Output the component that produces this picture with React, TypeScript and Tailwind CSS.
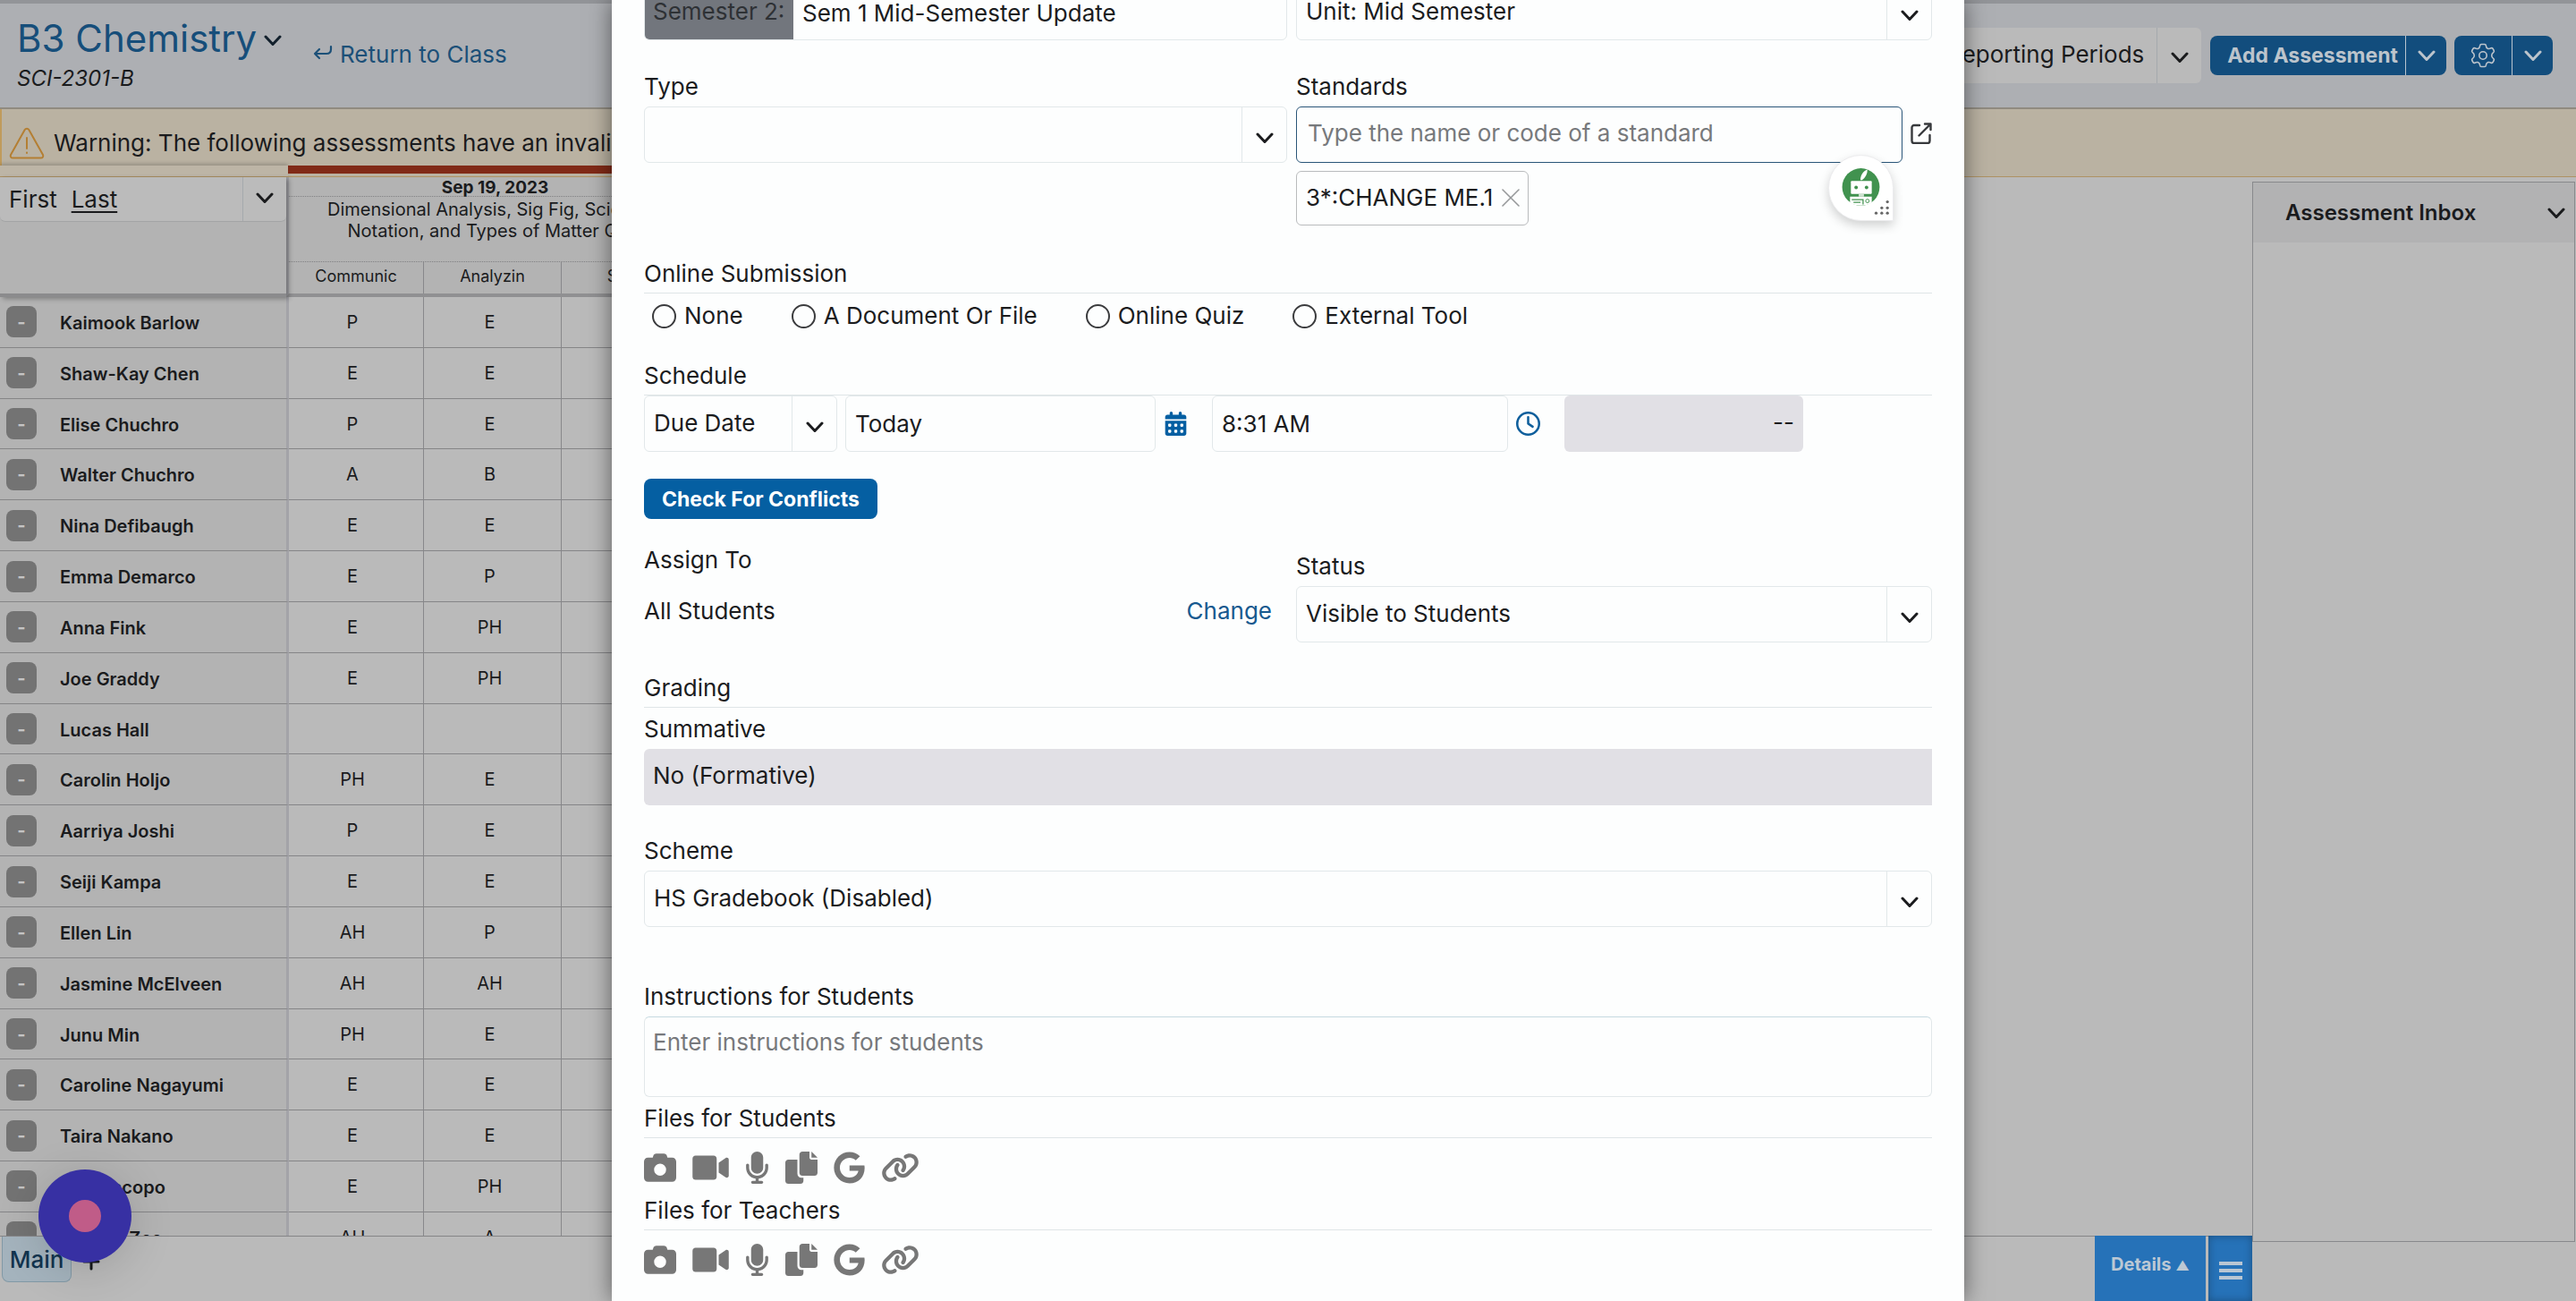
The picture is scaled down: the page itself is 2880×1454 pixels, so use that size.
import { ReactNode } from 'react';
import { FaCamera, FaMicrophone, FaGoogle, FaLink, FaCalendarDays, FaRegClock } from 'react-icons/fa6';

const students = [
    ['Kaimook Barlow', 'P', 'E'],
    ['Shaw-Kay Chen', 'E', 'E'],
    ['Elise Chuchro', 'P', 'E'],
    ['Walter Chuchro', 'A', 'B'],
    ['Nina Defibaugh', 'E', 'E'],
    ['Emma Demarco', 'E', 'P'],
    ['Anna Fink', 'E', 'PH'],
    ['Joe Graddy', 'E', 'PH'],
    ['Lucas Hall', '', ''],
    ['Carolin Holjo', 'PH', 'E'],
    ['Aarriya Joshi', 'P', 'E'],
    ['Seiji Kampa', 'E', 'E'],
    ['Ellen Lin', 'AH', 'P'],
    ['Jasmine McElveen', 'AH', 'AH'],
    ['Junu Min', 'PH', 'E'],
    ['Caroline Nagayumi', 'E', 'E'],
    ['Taira Nakano', 'E', 'E'],
    ['Mia Piscopo', 'E', 'PH'],
    ['Marcus Zee', 'AH', 'A'],
];

function Chevron({ className = '' }: { className?: string }) {
    return (
        <svg className={`w-5 h-5 ${className}`} viewBox="0 0 20 20" fill="none" stroke="currentColor" strokeWidth="3" strokeLinecap="round" strokeLinejoin="round" aria-hidden="true">
            <path d="M2 6 10 14.500 18 6" />
        </svg>
    );
}

function SelectField({ id, value, className = '' }: { id: string; value: string; className?: string }) {
    return (
        <div className={`relative h-[63px] ${className}`}>
            <select id={id} aria-label={value || id} className="appearance-none w-full h-full rounded-md border border-[#e2e8ea] bg-transparent pl-2.5 pr-14 pb-0.5">
                <option>{value}</option>
            </select>
            <div className="absolute inset-y-0 right-0 w-[51px] border-l border-[#e2e8ea] flex items-center justify-center pt-1.5 pointer-events-none">
                <Chevron />
            </div>
        </div>
    );
}

function SectionTitle({ children }: { children: ReactNode }) {
    return <h3 className="h-10 leading-9 border-b border-[#dfe5e7]">{children}</h3>;
}

function FileButtons() {
    return (
        <div className="flex items-center h-[66px] text-[#777777]">
            <button aria-label="Take photo" className="mr-[18px]"><FaCamera className="w-9 h-9" /></button>
            <button aria-label="Record video" className="mr-[18px]">
                <svg viewBox="0 0 576 512" className="w-[41px] h-9" fill="currentColor">
                    <path d="M384 112v288c0 26.51-21.49 48-48 48h-288c-26.51 0-48-21.49-48-48v-288c0-26.51 21.49-48 48-48h288C362.5 64 384 85.49 384 112zM576 127.5v256.9c0 25.5-29.17 40.39-50.39 25.79L416 334.7V177.3l109.6-75.56C546.9 87.13 576 102.1 576 127.5z" />
                </svg>
            </button>
            <button aria-label="Record audio" className="mr-[18px]"><FaMicrophone className="w-[27px] h-9" /></button>
            <button aria-label="Attach file" className="mr-[18px]">
                <svg viewBox="0 0 512 512" className="w-9 h-9" fill="currentColor">
                    <path d="M384 96L384 0h-112c-26.51 0-48 21.49-48 48v288c0 26.51 21.49 48 48 48H464c26.51 0 48-21.49 48-48V128h-95.1C398.4 128 384 113.6 384 96zM416 0v96h96L416 0zM192 352V128h-144c-26.51 0-48 21.49-48 48v288c0 26.51 21.49 48 48 48h192c26.51 0 48-21.49 48-48L288 416h-32C220.7 416 192 387.3 192 352z" />
                </svg>
            </button>
            <button aria-label="Google Drive" className="mr-[18px]"><FaGoogle className="w-[35px] h-9" /></button>
            <button aria-label="Add link"><FaLink className="w-[43px] h-9" /></button>
        </div>
    );
}

function Header() {
    return (
        <header className="h-[122px] shrink-0 flex bg-[#adafb3] border-t-4 border-t-[#929498] border-b-2 border-b-[#908b80]">
            <div className="pl-[19px] pt-3 w-[350px]">
                <button className="flex items-center gap-2 text-[42px] leading-[54px] text-[#164e7a] whitespace-nowrap">
                    B3 Chemistry <Chevron className="text-[#12202c] mt-1" />
                </button>
                <p className="text-2xl leading-9 italic">SCI-2301-B</p>
            </div>
            <a href="#class" className="flex items-center gap-2 h-[112px] text-[26px] text-[#1c5078]">
                <svg className="w-[22px] h-[22px]" viewBox="0 0 22 22" fill="none" stroke="currentColor" strokeWidth="2.2" strokeLinecap="round" strokeLinejoin="round">
                    <path d="M20 3v3c0 3-2 5-5 5H2M7 6l-5 5 5 5" />
                </svg>
                Return to Class
            </a>
            <div className="ml-auto mr-[26px] flex items-center h-[116px]">
                <button className="flex items-center h-[62px] rounded-md bg-[#bababa] text-[26px] mr-2.5">
                    <span className="px-3.5 pb-1 whitespace-nowrap">All Reporting Periods</span>
                    <span className="h-full w-[50px] border-l border-[#a5a9ad] flex items-center justify-center pt-1"><Chevron /></span>
                </button>
                <div className="flex h-11 rounded-lg bg-[#124d7d] text-[#bcc4cc] text-[23px] font-bold mr-[9px]">
                    <button className="pl-[19px] pr-2 whitespace-nowrap">Add Assessment</button>
                    <button aria-label="More assessment options" className="w-[46px] border-l border-[#b9c4cf] flex items-center justify-center"><Chevron /></button>
                </div>
                <div className="flex h-11 rounded-lg bg-[#124d7d] text-[#bcc4cc]">
                    <button aria-label="Settings" className="w-[64px] flex items-center justify-center">
                        <svg className="w-7 h-7" viewBox="0 0 28 28" fill="none" stroke="currentColor" strokeWidth="1.6" strokeLinejoin="round">
                            <path d="M12 1.500h4c.8 0 1.200.6 1.300 1.300.2 1.800.8 2.900 2 3.400 1.200.6 2.300.3 3.700-.4.8-.4 1.500-.2 1.900.4l1.300 2.300c.4.7.2 1.300-.4 1.800-1.400 1-2.100 2-2.100 3.700s.7 2.700 2.100 3.700c.6.5.8 1.100.4 1.800l-1.300 2.300c-.4.6-1.100.8-1.900.4-1.400-.7-2.500-1-3.700-.4-1.200.5-1.800 1.600-2 3.400-.1.7-.5 1.300-1.300 1.300h-4c-.8 0-1.200-.6-1.300-1.300-.2-1.800-.8-2.900-2-3.400-1.200-.6-2.300-.3-3.700.4-.8.4-1.500.2-1.900-.4l-1.300-2.300c-.4-.7-.2-1.300.4-1.800 1.400-1 2.100-2 2.100-3.700s-.7-2.700-2.100-3.700c-.6-.5-.8-1.100-.4-1.800l1.300-2.300c.4-.6 1.100-.8 1.900-.4 1.400.7 2.500 1 3.700.4 1.200-.5 1.800-1.600 2-3.400.1-.7.5-1.300 1.300-1.300z" />
                            <circle cx="14" cy="14" r="4.200" />
                        </svg>
                    </button>
                    <button aria-label="More settings" className="w-[46px] border-l border-[#b9c4cf] flex items-center justify-center"><Chevron /></button>
                </div>
            </div>
        </header>
    );
}

function Gradebook() {
    return (
        <div className="flex flex-col flex-1 min-w-0">
            <div className="flex h-[134px] shrink-0">
                <div className="relative w-[320px] bg-[#b3b3b3] border-b-4 border-[#8b8b8d] shadow-[3px_2px_5px_rgba(0,0,0,0.3)]">
                    <div className="flex h-[50px] bg-[#bbbbbb] text-[26px] border-b border-[#a3a4a5] rounded-b-md">
                        <div className="flex-1 flex gap-4 pl-2.5 leading-[44px]">
                            <button>First</button>
                            <button className="underline underline-offset-4 decoration-2">Last</button>
                        </div>
                        <button aria-label="Sort options" className="w-[49px] border-l border-[#a5a9ad] flex items-center justify-center pb-1"><Chevron /></button>
                    </div>
                </div>
                <div className="w-[464px] bg-[#b3b3b3] border-l-3 border-b-4 border-l-[#a3a3a8] border-b-[#909092] text-center">
                    <div className="h-[22px] leading-6 text-[19px] font-bold border-b border-dotted border-[#808082]">Sep 19, 2023</div>
                    <p className="h-[72px] pt-0.5 text-[20px] leading-6">Dimensional Analysis, Sig Fig, Scientific<br />Notation, and Types of Matter Quiz</p>
                    <div className="grid grid-cols-[151px_154px_156px] h-9 border-t border-dotted border-[#808082] text-lg leading-8">
                        <span className="border-r border-solid border-[#88888b]">Communic</span>
                        <span className="border-r border-solid border-[#88888b]">Analyzin</span>
                        <span>Safety</span>
                    </div>
                </div>
            </div>
            <div className="flex-1 min-h-0 overflow-hidden">
                <table className="table-fixed w-[784px] h-[1080px] border-separate border-spacing-0">
                    <tbody>
                        {students.map(([name, a, b]) => (
                            <tr key={name}>
                                <th className="w-[323px] p-0 bg-[#b3b3b3] border-b border-b-[#858587] border-r-3 border-r-[#a3a3a8] text-left">
                                    <div className="flex items-center gap-[26px] pl-[7px]">
                                        <button aria-label={`Collapse ${name}`} className="w-[34px] h-[35px] rounded-lg bg-[#737373] text-[#c4c4c4] text-xl leading-8 font-bold">-</button>
                                        <span className="pt-0.5 text-xl font-semibold">{name}</span>
                                    </div>
                                </th>
                                <td className="w-[151px] p-0 pr-2 bg-[#bababa] border-b border-b-[#858587] border-r border-r-[#88888b] text-center text-xl leading-6">{a}</td>
                                <td className="w-[154px] p-0 pr-1.5 bg-[#bababa] border-b border-b-[#858587] border-r border-r-[#88888b] text-center text-xl leading-6">{b}</td>
                                <td className="p-0 bg-[#bababa] border-b border-b-[#858587]"></td>
                            </tr>
                        ))}
                    </tbody>
                </table>
            </div>
            <footer className="h-[73px] shrink-0 flex border-t border-[#858587]">
                <button className="ml-0.5 h-[51px] w-[78px] rounded-b-lg border border-t-0 border-[#8299a6] bg-[#a4b3bd] text-[26px] text-[#12344f] font-medium">Main</button>
                <button aria-label="Add tab" className="ml-3 h-[56px] w-5 flex items-center">
                    <svg className="w-5 h-5" viewBox="0 0 20 20" stroke="#16181a" strokeWidth="3" strokeLinecap="round"><path d="M10 2v16M2 10h16" /></svg>
                </button>
                <div className="ml-auto flex text-[#bcc8d4] -mt-px">
                    <button className="w-[124px] h-full bg-[#2672b8] text-[20px] font-bold pb-2.5">Details <span className="text-[15px]">▲</span></button>
                    <button aria-label="Menu" className="w-[49px] ml-[3px] h-full bg-[#2672b8] shadow-[inset_0_0_10px_rgba(0,0,0,0.3)] flex flex-col items-center justify-center gap-1 pt-1">
                        <span className="w-[26px] h-1 bg-[#b9c6d3]"></span>
                        <span className="w-[26px] h-1 bg-[#b9c6d3]"></span>
                        <span className="w-[26px] h-1 bg-[#b9c6d3]"></span>
                    </button>
                </div>
            </footer>
        </div>
    );
}

function RobotBadge() {
    return (
        <button aria-label="Writing assistant" className="absolute right-2.5 top-[54px] w-[73px] h-[74px] bg-white rounded-full rounded-br-none border border-[#ececee] shadow-[0_5px_12px_rgba(0,0,0,0.18)]">
            <svg viewBox="0 0 73 74" className="w-full h-full">
                <circle cx="36.500" cy="36" r="21.500" fill="#41924f" />
                <path d="M36 28c0-6 3-10 8-12 0 5-2 9-6 12z" fill="#fff" />
                <rect x="25" y="29" width="24" height="15" rx="1" fill="#fff" />
                <circle cx="31" cy="36.500" r="2" fill="#41924f" />
                <circle cx="43" cy="36.500" r="2" fill="#41924f" />
                <rect x="34" y="44" width="6" height="3" fill="#cfe3d2" />
                <path d="M24 47h25v7c-7 4.500-18 4.500-25 0z" fill="#fff" />
                <path d="M26 50.500h13V56M28 53.500h8" stroke="#41924f" strokeWidth="1.300" fill="none" />
                <circle cx="44" cy="52" r="2" fill="none" stroke="#41924f" />
                <g fill="#666">
                    <circle cx="67" cy="53" r="1.700" /><circle cx="67" cy="60" r="1.700" /><circle cx="67" cy="66" r="1.700" />
                    <circle cx="60.500" cy="60" r="1.700" /><circle cx="60.500" cy="66" r="1.700" /><circle cx="54" cy="66" r="1.700" />
                </g>
            </svg>
        </button>
    );
}

function AssessmentDialog() {
    return (
        <div role="dialog" aria-label="Edit assessment" className="absolute inset-y-0 left-1/2 -translate-x-1/2 w-[52.5%] overflow-hidden bg-[#fdfefe] px-9 text-[26px] leading-9 text-[#1b1c1e]">
            <div className="-mt-[18px] grid grid-cols-[719fr_711fr] gap-x-2.5">
                <div className="flex h-[63px] rounded-md border border-[#e2e8ea] overflow-hidden">
                    <label htmlFor="title" className="w-[167px] -ml-px bg-[#72767d] text-[#2e3135] pl-2.5 pt-3 whitespace-nowrap">Semester 2:</label>
                    <input id="title" defaultValue="Sem 1 Mid-Semester Update" className="flex-1 min-w-0 bg-transparent px-2.5 pt-0.5 outline-none" />
                </div>
                <SelectField id="unit" value="Unit: Mid Semester" />
            </div>

            <div className="mt-[34px] grid grid-cols-[719fr_711fr] gap-x-2.5">
                <div>
                    <label htmlFor="type" className="block h-10">Type</label>
                    <SelectField id="type" value="" />
                </div>
                <div>
                    <label htmlFor="standards" className="block h-10">Standards</label>
                    <div className="relative flex items-center gap-[9px]">
                        <div className="relative flex-1">
                            <input id="standards" placeholder="Type the name or code of a standard" className="w-full h-[63px] rounded-md border border-[#2a5578] bg-transparent px-3 pb-1 placeholder:text-[#77797c] outline-none" />
                            <RobotBadge />
                        </div>
                        <button aria-label="Browse standards" className="pb-1">
                            <svg className="w-6 h-6" viewBox="0 0 24 24" fill="none" stroke="#37393c" strokeWidth="2.400" strokeLinecap="round" strokeLinejoin="round">
                                <path d="M10 3H4a2.500 2.500 0 0 0-2.500 2.500v15A2.500 2.500 0 0 0 4 23h15a2.500 2.500 0 0 0 2.500-2.500V14M16 1.500h6.500V8M22 2 9.500 14.500" />
                            </svg>
                        </button>
                    </div>
                    <div className="mt-[9px] inline-flex items-center h-[61px] rounded-md border border-[#b9bbbd] pl-2.5 pr-[9px] pb-0.5 gap-2.5">
                        3*:CHANGE ME.1
                        <button aria-label="Remove standard">
                            <svg className="w-5 h-5" viewBox="0 0 20 20" stroke="#96989a" strokeWidth="1.600" strokeLinecap="round"><path d="M1 1l18 18M19 1 1 19" /></svg>
                        </button>
                    </div>
                </div>
            </div>

            <fieldset className="mt-9">
                <SectionTitle>Online Submission</SectionTitle>
                <div className="flex gap-[54px] pl-[9px] h-[50px] items-center">
                    {['None', 'A Document Or File', 'Online Quiz', 'External Tool'].map((label) => (
                        <label key={label} className="flex items-center gap-[9px]">
                            <input type="radio" name="submission" className="appearance-none w-[27px] h-[27px] rounded-full border-2 border-[#3b3c3e]" />
                            {label}
                        </label>
                    ))}
                </div>
            </fieldset>

            <section className="mt-6">
                <SectionTitle>Schedule</SectionTitle>
                <div className="flex items-center">
                    <SelectField id="date-kind" value="Due Date" className="w-[216px] mr-[9px]" />
                    <input aria-label="Date" defaultValue="Today" className="w-[347px] h-[63px] rounded-md border border-[#e2e8ea] bg-transparent px-2.5" />
                    <button aria-label="Pick date" className="ml-2.5 mr-7 text-[#055fa2]"><FaCalendarDays className="w-[25px] h-[27px]" /></button>
                    <input aria-label="Time" defaultValue="8:31 AM" className="w-[331px] h-[63px] rounded-md border border-[#e2e8ea] bg-transparent px-2.5" />
                    <button aria-label="Pick time" className="ml-[9px] mr-[27px] text-[#0f5f9c]"><FaRegClock className="w-[27px] h-[27px]" /></button>
                    <output className="w-[267px] h-[63px] rounded-md bg-[#e1e0e5] text-right pr-2.5 pt-3">--</output>
                </div>
                <button className="mt-[30px] h-[45px] rounded-lg bg-[#055fa2] px-5 text-[23px] font-bold text-white block">Check For Conflicts</button>
            </section>

            <div className="mt-7 grid grid-cols-[719fr_711fr] gap-x-2.5">
                <div>
                    <h3>Assign To</h3>
                    <div className="flex justify-between pr-[17px] mt-[21px]">
                        <span>All Students</span>
                        <a href="#assign" className="text-[#17598f]">Change</a>
                    </div>
                </div>
                <div className="pt-[7px]">
                    <label htmlFor="status" className="block h-10">Status</label>
                    <SelectField id="status" value="Visible to Students" />
                </div>
            </div>

            <section className="mt-[33px]">
                <SectionTitle>Grading</SectionTitle>
                <div className="h-[46px] leading-[48px]">Summative</div>
                <output className="block h-[63px] rounded-l-md bg-[#e1e0e5] pl-2.5 pt-3">No (Formative)</output>
                <label htmlFor="scheme" className="block h-10 mt-[33px]">Scheme</label>
                <SelectField id="scheme" value="HS Gradebook (Disabled)" />
            </section>

            <section className="mt-[60px]">
                <label htmlFor="instructions" className="block h-10">Instructions for Students</label>
                <textarea id="instructions" placeholder="Enter instructions for students" className="block w-full h-[90px] resize-none rounded-md border border-[#e2e8ea] border-t-[#c5d9e0] bg-transparent px-[9px] pt-2.5 placeholder:text-[#77797c]"></textarea>
            </section>

            <section className="mt-1.5">
                <SectionTitle>Files for Students</SectionTitle>
                <FileButtons />
            </section>
            <section className="-mt-[3px]">
                <SectionTitle>Files for Teachers</SectionTitle>
                <FileButtons />
            </section>
        </div>
    );
}

export default function App() {
    return (
        <div className="relative h-screen overflow-hidden flex flex-col bg-[#bababa] text-[#1a1b1d] font-['Inter','Liberation_Sans',sans-serif]">
            <Header />
            <div className="h-[63px] shrink-0 flex items-center gap-2.5 pl-2 pt-3 bg-[#bab2a2] border-l-2 border-l-[#c09b5c] text-[26px]">
                <svg className="w-10 h-9" viewBox="0 0 40 36" fill="none" stroke="#b47f33" strokeWidth="2" strokeLinejoin="round" strokeLinecap="round">
                    <path d="M17.700 3 2 31c-.8 1.800.3 3.500 2.200 3.500h31.600c1.900 0 3-1.700 2.200-3.500L22.300 3c-1-1.800-3.600-1.800-4.600 0zM20 12v12M20 28.500v.5" />
                </svg>
                Warning: The following assessments have an invalid grading scheme
            </div>
            <div className="h-[13px] shrink-0 flex bg-[#bab2a2] border-b border-[#ae9263]">
                <div className="w-[322px] bg-[#bdb5a6] shadow-[0_-2px_4px_rgba(0,0,0,0.2)]"></div>
                <div className="w-[462px] h-[9px] bg-[#812a17]"></div>
            </div>
            <main className="flex-1 min-h-0 flex">
                <Gradebook />
                <aside className="w-[361px] mr-px mt-[5px] mb-[66px] border border-[#88898c] bg-[#bababa]">
                    <button className="w-full h-[67px] bg-[#b2b2b3] pl-9 pr-2.5 flex items-center justify-between text-2xl font-semibold">
                        Assessment Inbox <Chevron />
                    </button>
                </aside>
            </main>
            <button aria-label="Record" className="absolute left-[43px] bottom-[43px] w-[104px] h-[104px] rounded-full bg-[#3730a3] flex items-center justify-center shadow-[0_8px_50px_rgba(0,0,0,0.15)]">
                <span className="w-9 h-9 rounded-full bg-[#c05c88]"></span>
            </button>
            <div className="absolute inset-y-0 left-1/2 -translate-x-1/2 w-[52.5%] shadow-[0_0_24px_rgba(0,0,0,0.5)]"></div>
            <AssessmentDialog />
        </div>
    );
}
